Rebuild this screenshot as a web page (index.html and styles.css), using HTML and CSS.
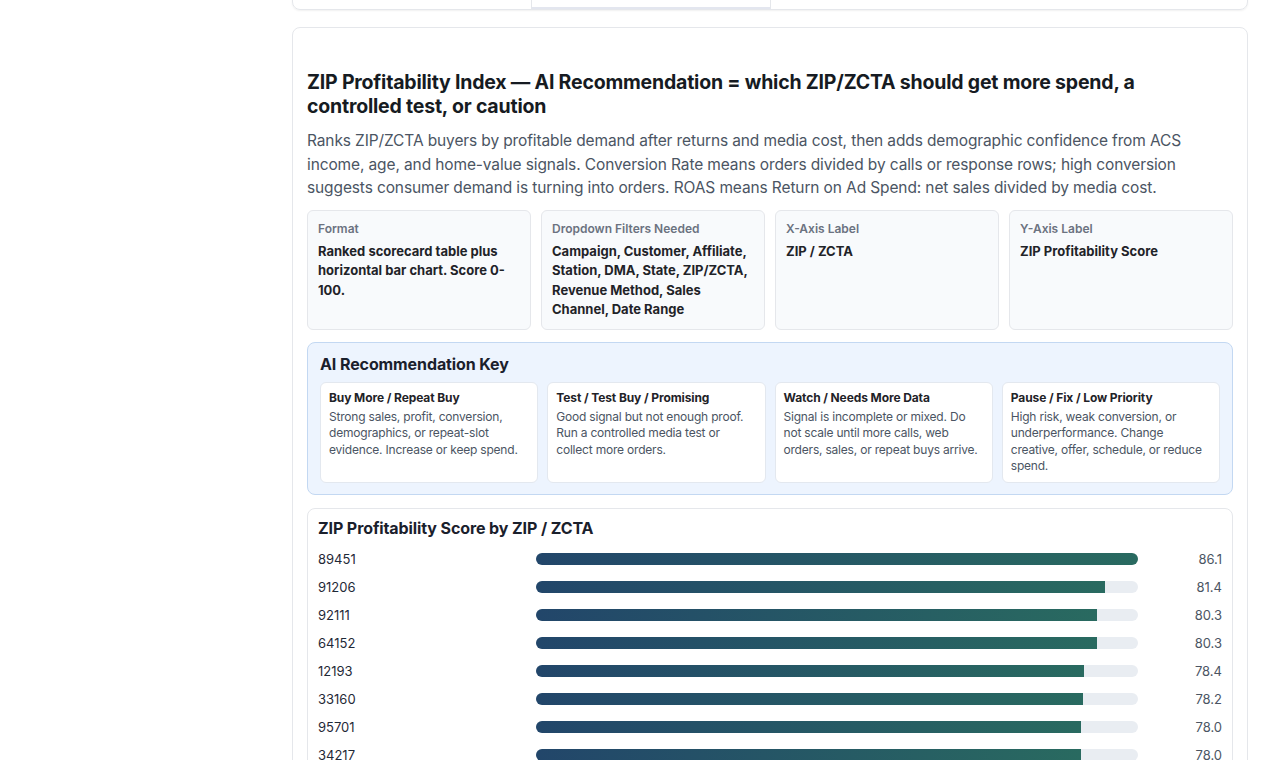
FILE: index.html
```html
<!DOCTYPE html>
<html lang="en">
<head>
    <meta charset="UTF-8">
    <meta name="viewport" content="width=device-width, initial-scale=1.0">
    <title>ZIP Profitability Index</title>
    <link rel="stylesheet" href="styles.css">
</head>
<body>
    <div class="layout">
        <aside class="sidebar"></aside>

        <main class="main">
            <!-- tab strip from the section above -->
            <div class="tab-strip">
                <div class="tab"></div>
                <div class="tab tab-active"></div>
                <div class="tab tab-wide"></div>
            </div>

            <section class="report-card">
                <h2 class="report-title">ZIP Profitability Index — AI Recommendation = which ZIP/ZCTA should get more spend, a controlled test, or caution</h2>
                <p class="report-desc">Ranks ZIP/ZCTA buyers by profitable demand after returns and media cost, then adds demographic confidence from ACS income, age, and home-value signals. Conversion Rate means orders divided by calls or response rows; high conversion suggests consumer demand is turning into orders. ROAS means Return on Ad Spend: net sales divided by media cost.</p>

                <div class="spec-grid">
                    <div class="spec-card">
                        <div class="spec-label">Format</div>
                        <div class="spec-value">Ranked scorecard table plus horizontal bar chart. Score 0-100.</div>
                    </div>
                    <div class="spec-card">
                        <div class="spec-label">Dropdown Filters Needed</div>
                        <div class="spec-value">Campaign, Customer, Affiliate, Station, DMA, State, ZIP/ZCTA, Revenue Method, Sales Channel, Date Range</div>
                    </div>
                    <div class="spec-card">
                        <div class="spec-label">X-Axis Label</div>
                        <div class="spec-value">ZIP / ZCTA</div>
                    </div>
                    <div class="spec-card">
                        <div class="spec-label">Y-Axis Label</div>
                        <div class="spec-value">ZIP Profitability Score</div>
                    </div>
                </div>

                <div class="key-box">
                    <h3 class="key-title">AI Recommendation Key</h3>
                    <div class="key-grid">
                        <div class="key-card">
                            <div class="key-name">Buy More / Repeat Buy</div>
                            <div class="key-text">Strong sales, profit, conversion, demographics, or repeat-slot evidence. Increase or keep spend.</div>
                        </div>
                        <div class="key-card">
                            <div class="key-name">Test / Test Buy / Promising</div>
                            <div class="key-text">Good signal but not enough proof. Run a controlled media test or collect more orders.</div>
                        </div>
                        <div class="key-card">
                            <div class="key-name">Watch / Needs More Data</div>
                            <div class="key-text">Signal is incomplete or mixed. Do not scale until more calls, web orders, sales, or repeat buys arrive.</div>
                        </div>
                        <div class="key-card">
                            <div class="key-name">Pause / Fix / Low Priority</div>
                            <div class="key-text">High risk, weak conversion, or underperformance. Change creative, offer, schedule, or reduce spend.</div>
                        </div>
                    </div>
                </div>

                <div class="chart-card">
                    <h3 class="chart-title">ZIP Profitability Score by ZIP / ZCTA</h3>
                    <div class="bar-list">
                        <div class="bar-row">
                            <span class="bar-label">89451</span>
                            <div class="bar-track"><div class="bar-fill" style="width: 100%"></div></div>
                            <span class="bar-value">86.1</span>
                        </div>
                        <div class="bar-row">
                            <span class="bar-label">91206</span>
                            <div class="bar-track"><div class="bar-fill" style="width: 94.54%"></div></div>
                            <span class="bar-value">81.4</span>
                        </div>
                        <div class="bar-row">
                            <span class="bar-label">92111</span>
                            <div class="bar-track"><div class="bar-fill" style="width: 93.26%"></div></div>
                            <span class="bar-value">80.3</span>
                        </div>
                        <div class="bar-row">
                            <span class="bar-label">64152</span>
                            <div class="bar-track"><div class="bar-fill" style="width: 93.26%"></div></div>
                            <span class="bar-value">80.3</span>
                        </div>
                        <div class="bar-row">
                            <span class="bar-label">12193</span>
                            <div class="bar-track"><div class="bar-fill" style="width: 91.06%"></div></div>
                            <span class="bar-value">78.4</span>
                        </div>
                        <div class="bar-row">
                            <span class="bar-label">33160</span>
                            <div class="bar-track"><div class="bar-fill" style="width: 90.82%"></div></div>
                            <span class="bar-value">78.2</span>
                        </div>
                        <div class="bar-row">
                            <span class="bar-label">95701</span>
                            <div class="bar-track"><div class="bar-fill" style="width: 90.59%"></div></div>
                            <span class="bar-value">78.0</span>
                        </div>
                        <div class="bar-row">
                            <span class="bar-label">34217</span>
                            <div class="bar-track"><div class="bar-fill" style="width: 90.59%"></div></div>
                            <span class="bar-value">78.0</span>
                        </div>
                    </div>
                </div>
            </section>
        </main>
    </div>
</body>
</html>
```

FILE: styles.css
```css
body {
    font-family: Inter, "Noto Sans", Arial, sans-serif;
    margin: 0;
    background-color: #fff;
    color: #111827;
}

.layout {
    display: flex;
}

.sidebar {
    width: 292px;
    flex-shrink: 0;
}

.main {
    width: 956px;
    padding-bottom: 40px;
}

/* tab strip, scrolled mostly out of view */
.tab-strip {
    display: flex;
    height: 40px;
    margin-top: -32px;
    border: 1px solid #e5e7eb;
    border-radius: 0 0 8px 8px;
    box-shadow: 0 1px 2px rgba(0, 0, 0, 0.06);
    overflow: hidden;
}

.tab {
    width: 238px;
    border-right: 1px solid #e5e7eb;
}

.tab-active {
    border-bottom: 2px solid #e3e6ef;
}

.tab-wide {
    flex: 1;
    border-right: none;
}

.report-card {
    margin-top: 17px;
    border: 1px solid #e5e7eb;
    border-radius: 8px;
    padding: 42px 14px 20px;
}

.report-title {
    margin: 0;
    font-size: 19.5px;
    line-height: 24px;
    font-weight: 700;
    color: #161b22;
    letter-spacing: -0.2px;
}

.report-desc {
    margin: 11px 0 10px;
    font-size: 15.5px;
    line-height: 23.5px;
    color: #4b5563;
    letter-spacing: -0.12px;
}

.spec-grid {
    display: grid;
    grid-template-columns: repeat(4, 1fr);
    gap: 10px;
}

.spec-card {
    background-color: #f8fafc;
    border: 1px solid #e5e7eb;
    border-radius: 6px;
    padding: 11px 10px 9px;
    min-height: 96px;
}

.spec-label {
    font-size: 12px;
    line-height: 14px;
    font-weight: 600;
    color: #6b7280;
}

.spec-value {
    margin-top: 6px;
    font-size: 13px;
    line-height: 19.5px;
    font-weight: 700;
    color: #1f2328;
}

.key-box {
    margin-top: 12px;
    background-color: #edf4fe;
    border: 1px solid #c3d8f2;
    border-radius: 8px;
    padding: 11px 12px 11px;
}

.key-title {
    margin: 0 0 8px;
    font-size: 16px;
    line-height: 20px;
    font-weight: 700;
    color: #1a202c;
    letter-spacing: -0.1px;
}

.key-grid {
    display: grid;
    grid-template-columns: repeat(4, 1fr);
    gap: 9px;
}

.key-card {
    background-color: #fff;
    border: 1px solid #e3e8ef;
    border-radius: 6px;
    padding: 7px 8px 7px;
    min-height: 82px;
}

.key-name {
    font-size: 12px;
    line-height: 16px;
    font-weight: 700;
    color: #1f2328;
    margin-bottom: 3px;
    letter-spacing: -0.1px;
}

.key-text {
    font-size: 12px;
    line-height: 16.5px;
    color: #4b5563;
    letter-spacing: -0.2px;
}

.chart-card {
    margin-top: 13px;
    border: 1px solid #e5e7eb;
    border-radius: 8px;
    padding: 9px 10px 12px;
}

.chart-title {
    margin: 0 0 7px;
    font-size: 16px;
    line-height: 20px;
    font-weight: 700;
    color: #1a202c;
    letter-spacing: -0.1px;
}

.bar-row {
    display: grid;
    grid-template-columns: 210px 1fr 76px;
    gap: 8px;
    align-items: center;
    height: 28px;
}

.bar-label {
    font-size: 13px;
    color: #1f2937;
}

.bar-track {
    height: 12px;
    background-color: #e9edf2;
    border-radius: 6px;
    overflow: hidden;
}

.bar-fill {
    height: 100%;
    background: linear-gradient(90deg, #22466a, #296a60);
}

.bar-value {
    font-size: 13px;
    color: #4b5563;
    text-align: right;
}
```
